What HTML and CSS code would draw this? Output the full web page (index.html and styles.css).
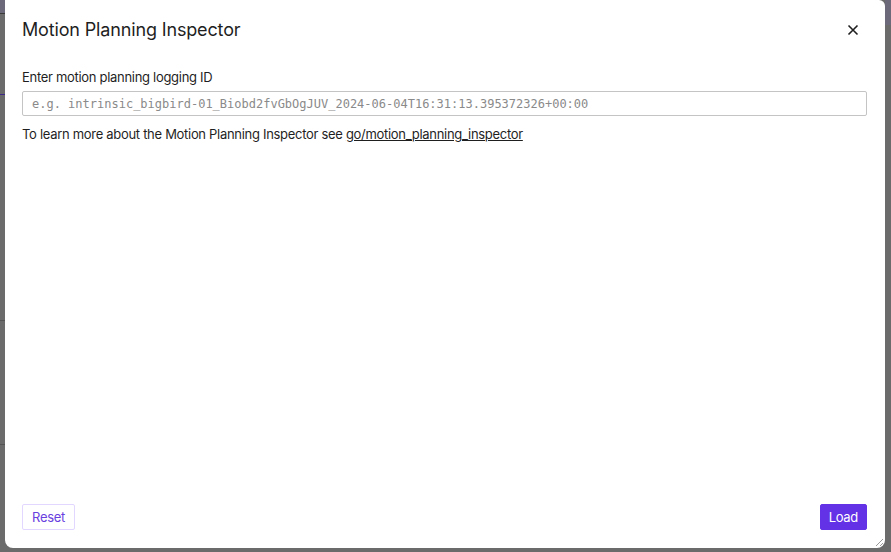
FILE: index.html
```html
<!DOCTYPE html>
<html lang="en">
<head>
<meta charset="utf-8">
<title>Motion Planning Inspector</title>
<link rel="stylesheet" href="styles.css">
</head>
<body>
<div class="backdrop">
  <div class="dialog">
    <div class="dialog-header">
      <h1 class="dialog-title">Motion Planning Inspector</h1>
      <button class="close-btn" aria-label="Close">
        <svg width="12" height="12" viewBox="0 0 12 12"><path d="M1.5 1.5L10.5 10.5M10.5 1.5L1.5 10.5" stroke="#1f1f1f" stroke-width="1.6" fill="none"/></svg>
      </button>
    </div>
    <div class="dialog-body">
      <label class="field-label" for="logid">Enter motion planning logging ID</label>
      <input id="logid" class="field-input" type="text" placeholder="e.g. intrinsic_bigbird-01_Biobd2fvGbOgJUV_2024-06-04T16:31:13.395372326+00:00">
      <p class="help">To learn more about the Motion Planning Inspector see <a href="#">go/motion_planning_inspector</a></p>
    </div>
    <div class="dialog-footer">
      <button class="btn btn-outline">Reset</button>
      <button class="btn btn-primary">Load</button>
    </div>
    <svg class="resize" width="10" height="10" viewBox="0 0 10 10"><path d="M9 2L2 9M9 6L6 9" stroke="#9a9a9a" stroke-width="1" fill="none"/></svg>
  </div>
</div>
</body>
</html>
```
FILE: styles.css
```css
html, body {
  margin: 0;
  padding: 0;
  height: 100%;
}
body {
  background: #6b6b6b;
  font-family: Inter, "Noto Sans", sans-serif;
  overflow: hidden;
}
.backdrop {
  height: 552px;
  background:
    linear-gradient(to bottom, #6c697b 0, #6c697b 13px, #3a3a3a 13px, #3a3a3a 14px, transparent 14px) left top / 5px 100% no-repeat,
    linear-gradient(to bottom, transparent 94px, #3d2a8a 94px, #3d2a8a 95px, transparent 95px) left top / 5px 100% no-repeat,
    linear-gradient(to bottom, transparent 320px, #555 320px, #555 321px, transparent 321px) left top / 5px 100% no-repeat,
    linear-gradient(to bottom, transparent 444px, #555 444px, #555 445px, transparent 445px) left top / 5px 100% no-repeat,
    linear-gradient(to bottom, #6c697b 0, #6c697b 25px, transparent 25px) right top / 6px 100% no-repeat,
    #6b6b6b;
}
.dialog {
  position: relative;
  margin-left: 5px;
  width: 880px;
  height: 548px;
  background: #fff;
  border-radius: 0 6px 8px 8px;
  display: flex;
  flex-direction: column;
  box-sizing: border-box;
}
.dialog-header {
  display: flex;
  align-items: center;
  justify-content: space-between;
  padding: 18px 26px 0 17px;
  height: 41px;
  box-sizing: border-box;
}
.dialog-title {
  margin: 0;
  font-size: 18px;
  font-weight: 400;
  color: #1f1f1f;
  letter-spacing: -0.15px;
}
.close-btn {
  border: 0;
  background: none;
  padding: 0;
  width: 12px;
  height: 12px;
  display: flex;
  cursor: pointer;
}
.dialog-body {
  flex: 1;
  padding: 28px 18px 0 17px;
  display: flex;
  flex-direction: column;
}
.field-label {
  font-size: 13px;
  color: #1f1f1f;
  line-height: 16px;
  letter-spacing: -0.3px;
}
.field-input {
  margin-top: 6px;
  height: 25px;
  box-sizing: border-box;
  border: 1px solid #c4c4c4;
  border-radius: 2px;
  padding: 0 9px;
  font-family: "DejaVu Sans Mono", monospace;
  font-size: 12px;
  color: #1f1f1f;
  outline: none;
}
.field-input::placeholder {
  color: #8a8a8a;
}
.help {
  margin: 10px 0 0;
  font-size: 13px;
  line-height: 16px;
  color: #1f1f1f;
  letter-spacing: -0.3px;
}
.help a {
  color: #1f1f1f;
  text-decoration: underline;
}
.dialog-footer {
  display: flex;
  justify-content: space-between;
  align-items: flex-end;
  padding: 0 18px 18px 17px;
}
.btn {
  height: 26px;
  font-family: Inter, "Noto Sans", sans-serif;
  font-size: 13px;
  letter-spacing: -0.3px;
  border-radius: 2px;
  padding: 0 9px;
  cursor: pointer;
}
.btn-outline {
  background: #fff;
  border: 1px solid #e2d8ff;
  color: #6a3fe0;
}
.btn-primary {
  background: #6331e6;
  border: 1px solid #6331e6;
  color: #fff;
  padding: 0 8px;
}
.resize {
  position: absolute;
  right: 1px;
  bottom: 1px;
}
```
